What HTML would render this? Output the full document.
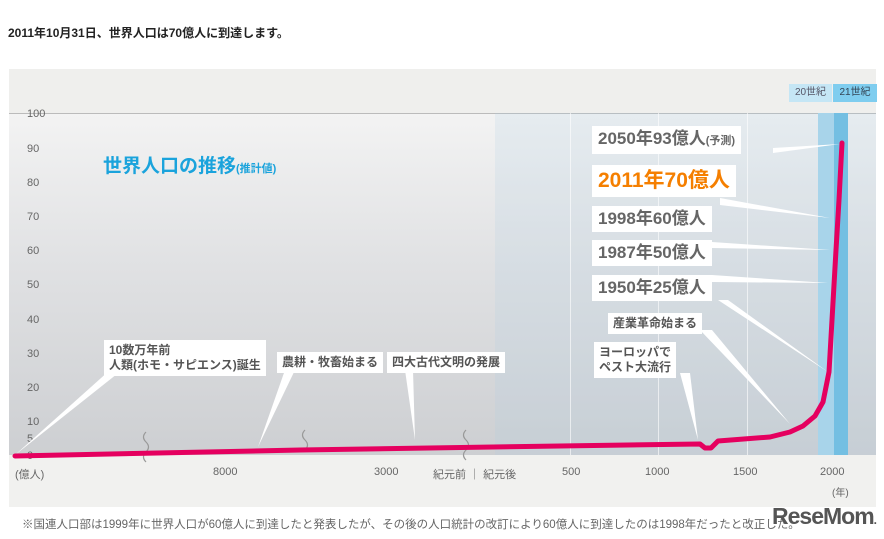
<!DOCTYPE html><html><head><meta charset="utf-8"><style>
body{margin:0;width:884px;height:539px;background:#fff;position:relative;overflow:hidden;font-family:"Liberation Sans","Noto Sans CJK JP",sans-serif}
.a{position:absolute}
.lb{position:absolute;background:#fff;color:#555;font-weight:bold;font-size:12px;line-height:15px;padding:3px 5px}
.big{position:absolute;background:#fff;color:#666;font-weight:bold;font-size:17px;padding:2px 6px;line-height:22px}
.yl{position:absolute;left:27px;font-size:11px;color:#666}
.xl{position:absolute;top:466px;font-size:11px;color:#666}
</style></head><body>
<div class="a" style="left:8px;top:24px;font-size:12px;font-weight:bold;color:#222">2011年10月31日、世界人口は70億人に到達します。</div>
<div class="a" style="left:9px;top:69px;width:867px;height:44px;background:#efefed"></div>
<div class="a" style="left:9px;top:113px;width:867px;height:342px;background:linear-gradient(#f3f3f3,#e0e1e3 45%,#cdcfd2)"></div>
<div class="a" style="left:9px;top:113px;width:867px;height:1px;background:#bbb"></div>
<div class="a" style="left:495px;top:113px;width:381px;height:342px;background:rgba(170,205,228,0.18)"></div>
<div class="a" style="left:570px;top:113px;width:1px;height:342px;background:rgba(255,255,255,.6)"></div>
<div class="a" style="left:658px;top:113px;width:1px;height:342px;background:rgba(255,255,255,.6)"></div>
<div class="a" style="left:747px;top:113px;width:1px;height:342px;background:rgba(255,255,255,.6)"></div>
<div class="a" style="left:818px;top:113px;width:16px;height:342px;background:#a8d4ea"></div>
<div class="a" style="left:834px;top:113px;width:14px;height:342px;background:#74bfe2"></div>
<div class="a" style="left:789px;top:84px;width:43px;height:18px;background:#c5e6f5;font-size:10px;color:#556;line-height:18px;text-align:center">20世紀</div>
<div class="a" style="left:833px;top:84px;width:44px;height:18px;background:#7fcdef;font-size:10px;color:#345;line-height:18px;text-align:center">21世紀</div>
<div class="a" style="left:9px;top:455px;width:867px;height:52px;background:#f1f1ef"></div>
<div class="yl" style="top:108px">100</div><div class="yl" style="top:143px">90</div><div class="yl" style="top:177px">80</div><div class="yl" style="top:211px">70</div><div class="yl" style="top:245px">60</div><div class="yl" style="top:279px">50</div><div class="yl" style="top:314px">40</div><div class="yl" style="top:348px">30</div><div class="yl" style="top:382px">20</div><div class="yl" style="top:416px">10</div><div class="yl" style="top:433px">5</div><div class="yl" style="top:450px">0</div>
<div class="a" style="left:103px;top:151px;font-size:19px;font-weight:bold;color:#1aa3dc">世界人口の推移<span style="font-size:11px">(推計値)</span></div>
<svg class="a" style="left:0;top:0" width="884" height="539">
<g fill="#fff"><polygon points="15,455 110,370 122,370"/><polygon points="258,447 285,370 295,370"/><polygon points="415,440 405,370 413,370"/><polygon points="698,440 680,373 690,373"/><polygon points="790,424 700,330 712,330"/><polygon points="828,372 718,300 728,300"/><polygon points="828,283 712,275 712,282"/><polygon points="830,250 712,242 712,248"/><polygon points="830,218 720,198 720,205"/><polygon points="840,144 773,148 773,153"/></g>
<g stroke="#999" stroke-width="1.2" fill="none"><path d="M146 432q-5 5 0 10q5 5 0 10q-5 5 0 10"/><path d="M305 430q-5 5 0 10q5 5 0 10"/><path d="M466 430q-5 5 0 10q5 5 0 10q-5 5 0 10"/></g>
<path d="M15 456 L300 450 L560 446 L700 444 L705 448 L711 448 L718 441 L770 437 L790 432 L803 426 L815 416 L823 402 L829 372 L832 320 L836 250 L839 200 L842 143" stroke="#e5005f" stroke-width="5" fill="none" stroke-linejoin="round" stroke-linecap="round"/>
</svg>
<div class="big" style="left:592px;top:126px;">2050年93億人<span style="font-size:11px">(予測)</span></div>
<div class="big" style="left:592px;top:165px;color:#f57f00;font-size:21px;line-height:28px">2011年70億人</div>
<div class="big" style="left:592px;top:206px;">1998年60億人</div>
<div class="big" style="left:592px;top:240px;">1987年50億人</div>
<div class="big" style="left:592px;top:275px;">1950年25億人</div>
<div class="lb" style="left:608px;top:313px">産業革命始まる</div>
<div class="lb" style="left:594px;top:342px">ヨーロッパで<br>ペスト大流行</div>
<div class="lb" style="left:104px;top:340px">10数万年前<br>人類(ホモ・サピエンス)誕生</div>
<div class="lb" style="left:277px;top:352px">農耕・牧畜始まる</div>
<div class="lb" style="left:387px;top:352px">四大古代文明の発展</div>
<div class="xl" style="left:15px">(億人)</div><div class="xl" style="left:213px">8000</div><div class="xl" style="left:374px">3000</div><div class="xl" style="left:433px">紀元前 ｜ 紀元後</div><div class="xl" style="left:562px">500</div><div class="xl" style="left:645px">1000</div><div class="xl" style="left:733px">1500</div><div class="xl" style="left:820px">2000</div><div class="xl" style="left:832px;top:484px;font-size:10px">(年)</div>
<div class="a" style="left:22px;top:516px;font-size:11.5px;color:#666">※国連人口部は1999年に世界人口が60億人に到達したと発表したが、その後の人口統計の改訂により60億人に到達したのは1998年だったと改正した。</div>
<div class="a" style="left:772px;top:503px;font-size:23px;font-weight:bold;color:#555;letter-spacing:-1px">ReseMom<span style="font-size:12px">.</span></div>
</body></html>
